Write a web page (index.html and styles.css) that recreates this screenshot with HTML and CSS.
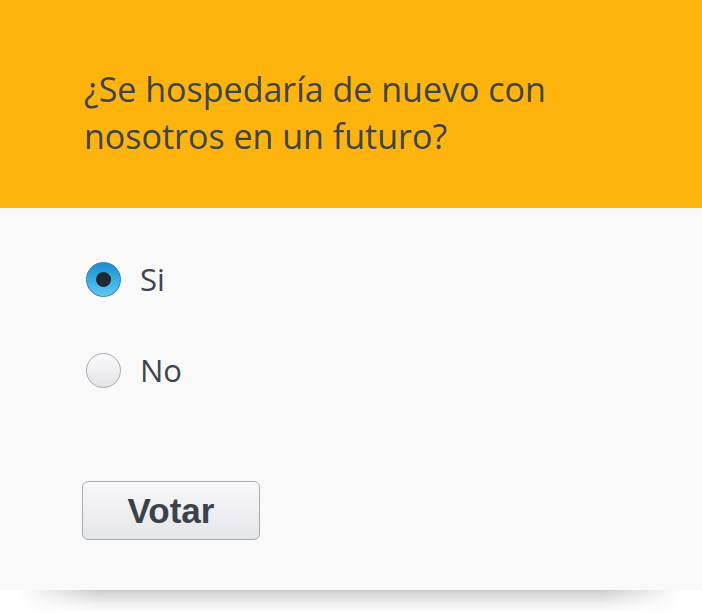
FILE: index.html
```html
<!DOCTYPE html>
<html lang="es">
<head>
    <meta charset="UTF-8">
    <meta name="viewport" content="width=device-width, initial-scale=1.0">
    <title>Encuesta</title>
    <link rel="stylesheet" href="styles.css">
</head>
<body>
    <div class="poll">
        <div class="poll-header">
            <h1>¿Se hospedaría de nuevo con nosotros en un futuro?</h1>
        </div>
        <form class="poll-body">
            <label class="option">
                <input type="radio" name="vote" value="si" checked>
                <span>Si</span>
            </label>
            <label class="option">
                <input type="radio" name="vote" value="no">
                <span>No</span>
            </label>
            <button type="button">Votar</button>
        </form>
    </div>
    <div class="poll-shadow"></div>
</body>
</html>
```

FILE: styles.css
```css
* {
    margin: 0;
    padding: 0;
    box-sizing: border-box;
}
body {
    background-color: #fff;
    font-family: 'Open Sans', sans-serif;
    color: #3c444d;
}
.poll {
    width: 702px;
    background-color: #f9f9f9;
}
.poll-header {
    background-color: #ffb40d;
    height: 208px;
    padding: 66px 84px 0 84px;
}
.poll-header h1 {
    font-weight: normal;
    font-size: 34px;
    line-height: 47px;
    max-width: 540px;
}
.poll-body {
    padding: 40px 82px 50px 82px;
}
.option {
    display: flex;
    align-items: center;
    gap: 19px;
    height: 62px;
    margin-bottom: 29px;
    padding-left: 4px;
    font-size: 31px;
}
.option input {
    appearance: none;
    -webkit-appearance: none;
    width: 35px;
    height: 35px;
    border-radius: 50%;
    border: 1px solid #a9adb2;
    background: linear-gradient(#fbfbfc, #e3e4e7);
}
.option input:checked {
    border-color: #3a7ea8;
    background:
        radial-gradient(circle, #1f2930 0, #1f2930 7px, transparent 7.8px),
        linear-gradient(#1a8fcc, #3db3e8 60%, #62c8f1);
}
button {
    display: block;
    margin-top: 80px;
    width: 178px;
    height: 59px;
    border: 1px solid #a9adb3;
    border-radius: 6px;
    background: linear-gradient(#f8f8f9, #e5e6e9);
    font-family: 'Liberation Sans', Arial, sans-serif;
    font-weight: bold;
    font-size: 35px;
    color: #3a434b;
    cursor: pointer;
}
/* soft shadow under the card */
.poll-shadow {
    width: 662px;
    height: 23px;
    margin-left: 20px;
    background: linear-gradient(rgba(0, 0, 0, 0.2), rgba(0, 0, 0, 0.06) 60%, rgba(0, 0, 0, 0));
    -webkit-mask-image: linear-gradient(to right, transparent, #000 12%, #000 88%, transparent);
    mask-image: linear-gradient(to right, transparent, #000 12%, #000 88%, transparent);
}
```
